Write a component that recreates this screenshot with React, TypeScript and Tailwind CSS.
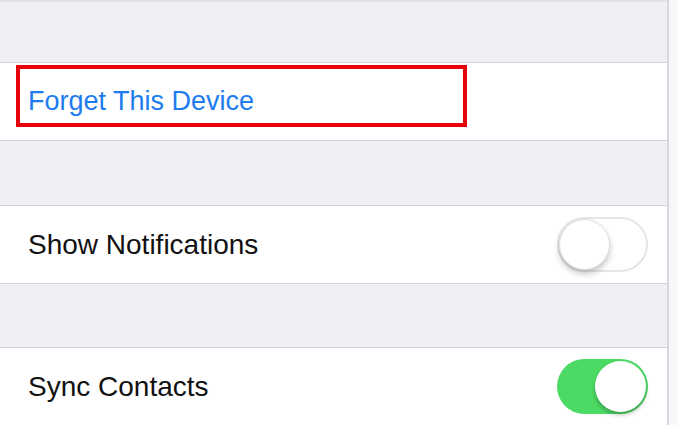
function Toggle({ on }: { on: boolean }) {
  if (on) {
    return (
      <div className="w-[91px] h-[55px] rounded-full bg-[#4cd964] flex items-center justify-end p-[2px]">
        <div className="w-[51px] h-[51px] rounded-full bg-white shadow-[0_3px_4px_rgba(0,0,0,0.25)]" />
      </div>
    );
  }
  return (
    <div className="w-[91px] h-[55px] rounded-full bg-white border-2 border-[#e5e5ea] flex items-center justify-start">
      <div className="w-[51px] h-[51px] rounded-full bg-white border border-[#dedee2] shadow-[0_4px_6px_rgba(0,0,0,0.22)]" />
    </div>
  );
}

function Row({ label, blue, toggle }: { label: string; blue?: boolean; toggle?: "on" | "off" }) {
  return (
    <div className="h-[77px] bg-white flex items-center justify-between pl-[28px] pr-[19px]">
      <span className={blue ? "text-[27px] text-[#1c7cf0]" : "text-[28px] text-[#111]"}>{label}</span>
      {toggle && <Toggle on={toggle === "on"} />}
    </div>
  );
}

export default function App() {
  return (
    <div
      className="relative w-[677px] h-[425px] overflow-hidden bg-[#f4f4f7] flex"
      style={{ fontFamily: '"Liberation Sans", Arial, sans-serif' }}
    >
      <div className="w-[667px] flex flex-col bg-[#efeff4]">
        <div className="h-[62px] border-t-2 border-[#e2e2e8]" />
        <div className="h-px bg-[#d2d2d8]" />
        <Row label="Forget This Device" blue />
        <div className="h-px bg-[#d2d2d8]" />
        <div className="h-[64px]" />
        <div className="h-px bg-[#d2d2d8]" />
        <Row label="Show Notifications" toggle="off" />
        <div className="h-px bg-[#d2d2d8]" />
        <div className="h-[63px]" />
        <div className="h-px bg-[#d2d2d8]" />
        <Row label="Sync Contacts" toggle="on" />
      </div>
      <div className="w-[2px] bg-[#d6d6dc]" />
      <div className="flex-1 bg-[#f7f7f9]" />
      <div className="absolute left-[16px] top-[65px] w-[451px] h-[62px] border-4 border-[#e8000b]" />
    </div>
  );
}
